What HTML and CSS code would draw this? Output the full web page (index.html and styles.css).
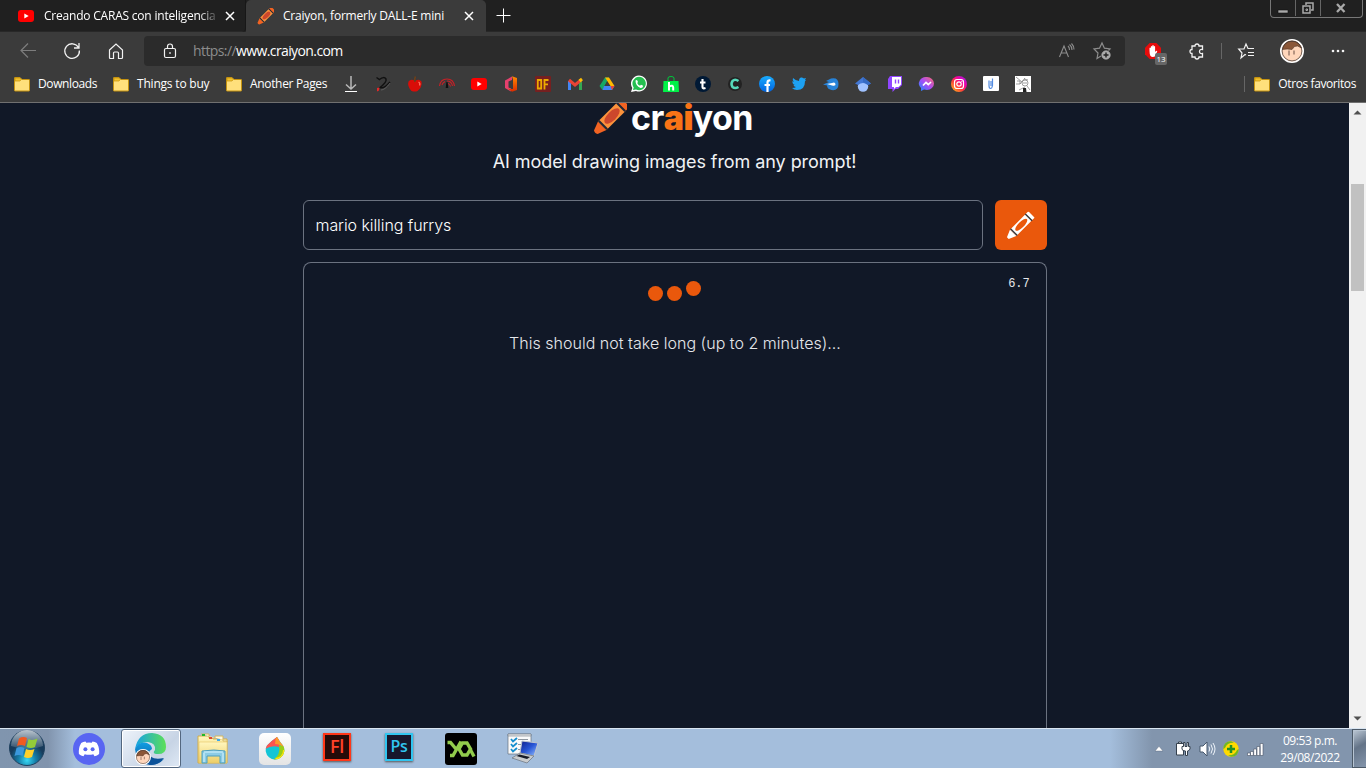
FILE: index.html
```html
<!DOCTYPE html>
<html lang="es">
<head>
<meta charset="utf-8">
<title>Craiyon, formerly DALL-E mini</title>
<link rel="stylesheet" href="styles.css">
</head>
<body>
<svg class="defs" width="0" height="0">
  <defs>
    <symbol id="folder" viewBox="0 0 16 16"><path d="M.5 2q0-.5.5-.5h5l2 2h7q.5 0 .5.5v10.500q0 .5-.5.5H1q-.5 0-.5-.5z" fill="#ffe07c" stroke="#c49210"/><path d="M1 2h5l1.300 1.500L6 5H1z" fill="#f2c12e" stroke="#c49210" stroke-width=".7"/></symbol>
    <symbol id="close" viewBox="0 0 10 10"><path d="M1 1l8 8M9 1L1 9" stroke="#fff" stroke-width="1.500"/></symbol>
    <symbol id="youtube" viewBox="0 0 16 16"><rect y="2" width="16" height="12" rx="3" fill="#f00"/><path d="M6.300 5.500v5L10.700 8z" fill="#fff"/></symbol>
    <symbol id="crayon" viewBox="0 0 34 34"><g transform="rotate(45 17 17)"><path d="M11 28l3.500 9q2.500 2 5 0l3.500-9z" fill="#f26322"/><rect x="11" y="1" width="12" height="27" fill="#fb923c"/><path d="M11 1v-4q0-2 2-2h8q2 0 2 2v4z" fill="#f26322"/><path d="M11 1.500h12M11 27h12" stroke="#222735" stroke-width="2"/><ellipse cx="17" cy="14.200" rx="4.400" ry="10" fill="#cc472c"/></g></symbol>
    <symbol id="face" viewBox="0 0 24 24"><circle cx="12" cy="12" r="11.200" fill="#ffd6bb" stroke="#fff" stroke-width="1.600"/><path d="M2.500 10.500Q4 2 12 2Q19 2 21.500 9L17.500 7L14.500 7.500L12 10.500Q7 9.500 2.500 10.500z" fill="#8b5738" stroke="#51372a" stroke-width=".6"/><circle cx="12" cy="12" r="9.900" fill="none" stroke="#3b302c" stroke-width=".7"/><path d="M9 11.500v5m5-5v4" stroke="#6c5147" stroke-width="1"/></symbol>
    <linearGradient id="edge1" x2="1"><stop stop-color="#15a1e6"/><stop offset="1" stop-color="#5ce057"/></linearGradient>
    <linearGradient id="edge2" x2="0" y2="1"><stop stop-color="#119de2"/><stop offset="1" stop-color="#0c579f"/></linearGradient>
    <linearGradient id="insta" x1="0" y1="1" x2="1" y2="0"><stop stop-color="#ffca18"/><stop offset=".4" stop-color="#ff4038"/><stop offset=".65" stop-color="#f000a1"/><stop offset="1" stop-color="#8e22f3"/></linearGradient>
    <linearGradient id="messenger" x1="0" y1="1" x2="1" y2="0"><stop stop-color="#178bff"/><stop offset=".5" stop-color="#a94cf6"/><stop offset="1" stop-color="#ff6b69"/></linearGradient>
    <linearGradient id="fb" x2="0" y2="1"><stop stop-color="#18acfe"/><stop offset="1" stop-color="#0163e0"/></linearGradient>
    <linearGradient id="office" x2="0" y2="1"><stop stop-color="#ff8a00"/><stop offset="1" stop-color="#d92b00"/></linearGradient>
    <radialGradient id="orb" cy=".85"><stop stop-color="#39d9f4"/><stop offset=".5" stop-color="#157da8"/><stop offset="1" stop-color="#173b5b"/></radialGradient>
    <linearGradient id="shine" x2="0" y2="1"><stop stop-color="#fff" stop-opacity=".7"/><stop offset="1" stop-color="#fff" stop-opacity=".1"/></linearGradient>
    <linearGradient id="screen" x2="1" y2="1"><stop stop-color="#101f8a"/><stop offset=".5" stop-color="#2856d6"/><stop offset="1" stop-color="#9bc5ff"/></linearGradient>
    <linearGradient id="tray" x2="0" y2="1"><stop stop-color="#fff"/><stop offset="1" stop-color="#e4e4e4"/></linearGradient>
    <linearGradient id="paper" x2="0" y2="1"><stop stop-color="#fff6bd"/><stop offset="1" stop-color="#edce68"/></linearGradient>
    <clipPath id="drop"><path d="M18 4Q21 9 24 12.500A9.300 9.300 0 1 1 8 12.500Q12 8 18 4z"/></clipPath>
  </defs>
</svg>

<header class="browser">
  <div class="tabs">
    <div class="tab tab-back">
      <svg width="16" height="16"><use href="#youtube"/></svg>
      <span class="tab-title fade">Creando CARAS con inteligencia</span>
      <svg class="tab-close" width="10" height="10"><use href="#close"/></svg>
    </div>
    <div class="tab tab-active">
      <svg width="17" height="17"><use href="#crayon"/></svg>
      <span class="tab-title second">Craiyon, formerly DALL-E mini</span>
      <svg class="tab-close" width="10" height="10"><use href="#close"/></svg>
    </div>
    <svg class="new-tab" width="14" height="14" fill="none" stroke="#fff"><path d="M-.5 7.500h14M6.500 .5v14"/></svg>
    <div class="window-buttons">
      <div class="wb"><svg width="12" height="12"><path d="M1 8h10v3H1z" fill="#a9a9a9" stroke="#111" stroke-width=".6"/></svg></div>
      <div class="wb"><svg width="12" height="12" fill="none" stroke="#a9a9a9" stroke-width="1.500"><path d="M4 3V1h7v7H9M1 4h7v7H1z"/><path d="M4 7h1.500v1.500H4z" stroke-width="1"/></svg></div>
      <div class="wb wide"><svg width="10" height="10"><path d="M1 1l7.500 8M8.500 1L1 9" stroke="#a9a9a9" stroke-width="2.300"/></svg></div>
    </div>
  </div>

  <div class="nav">
    <svg class="back" width="16" height="16" fill="none" stroke="#7d7d7d" stroke-width="1.200"><path d="M16 7.500H1M8 .5L1 7.500l7 7"/></svg>
    <svg class="reload" width="18" height="18" fill="none" stroke="#f2f2f2" stroke-width="1.300"><path d="M15.500 5.500a7.300 7.300 0 1 0 .9 3M16 1v5h-5"/></svg>
    <svg class="home" width="16" height="18" fill="none" stroke="#f2f2f2" stroke-width="1.200"><path d="M1.500 8L8 2l6.500 6v7.500q0 1-1 1h-3V11q0-1-1-1h-3q-1 0-1 1v5.500h-3q-1 0-1-1z"/></svg>
    <div class="address">
      <svg width="12" height="16" fill="none" stroke="#f2f2f2" stroke-width="1.200"><rect x=".5" y="5.500" width="11" height="9" rx="1.500"/><path d="M3.500 5V3.500q0-2.500 2.500-2.500t2.500 2.500V5"/><path d="M5.200 9.200h1.600v1.600H5.200z" fill="#f2f2f2" stroke="none"/></svg>
      <span class="url"><span class="scheme">https://</span>www.craiyon.com</span>
      <svg class="read" width="16" height="16" fill="none" stroke="#8d8d8d" stroke-width="1.100"><path d="M.5 14L5 3l4.500 11M2.200 10h5.600M9 3q1.600 1.500 1.500 4M10.500 1.500q2.500 2 2.500 5.500M12.500.5q2.500 2.500 2.500 6"/></svg>
      <svg width="18" height="18" fill="none" stroke="#8d8d8d" stroke-width="1.200"><path d="M8 14l-4 2.500 1-5.500L1 7l5.500-.8L9 1l2.400 5.200L17 7l-1.500 1.500"/><circle cx="13" cy="13" r="4.300" fill="#aaa" stroke="#aaa" stroke-width=".6"/><path d="M10.500 13h5M13 10.500v5" stroke="#222" stroke-width="1.400"/></svg>
    </div>
    <div class="blocker">
      <svg width="16" height="16"><path d="M4.700 0h6.600L16 4.700v6.600L11.300 16H4.700L0 11.300V4.700z" fill="#e60c0c"/><path d="M4.500 8V5q.7-1 1.400 0V3.500q.7-1 1.400 0V2.500q.7-1 1.400 0v1q.7-1 1.400 0V9q1.500-2 2.200-1L10.500 13q-3 2-5 0-1-2-1-5" fill="#fff"/></svg>
      <span class="badge">13</span>
    </div>
    <svg class="puzzle" width="16" height="17" fill="none" stroke="#f2f2f2" stroke-width="1.300"><path d="M3 3h3q0-2 2-2t2 2h3.500v3.500Q10.500 6 10.500 8.500t3 2V14H10q0 2-2 2t-2-2H3v-3.500q-2 0-2-2t2-2z"/></svg>
    <i class="divider"></i>
    <svg class="favs" width="17" height="16" fill="none" stroke="#f2f2f2" stroke-width="1.200"><path d="M8 12l-1-.5L3 15l1-5L.7 6H6l2-5 2 4.500H16M10 9.500h6M10 12.500h6"/></svg>
    <svg class="profile" width="24" height="24"><use href="#face"/></svg>
    <svg width="14" height="4" fill="#f4f4f4"><circle cx="2" cy="2" r="1.300"/><circle cx="7" cy="2" r="1.300"/><circle cx="12" cy="2" r="1.300"/></svg>
  </div>

  <div class="bookmarks">
    <div class="bm-folder f1"><svg width="16" height="16"><use href="#folder"/></svg><span>Downloads</span></div>
    <div class="bm-folder f2"><svg width="16" height="16"><use href="#folder"/></svg><span>Things to buy</span></div>
    <div class="bm-folder f3"><svg width="16" height="16"><use href="#folder"/></svg><span>Another Pages</span></div>
    <div class="bm-icons">
      <svg viewBox="0 0 16 16" fill="none" stroke="#b9b9b9" stroke-width="1.500"><path d="M8 0v13M3 8.500L8 13l5-4.500"/><path d="M2 15.500h12" stroke="#fff" stroke-width="1"/></svg>
      <svg viewBox="0 0 16 16" fill="none"><path d="M1.500 1.500l3 2Q9 0 11 3q1 3-6 8.500Q9 13 15 6" stroke="#111" stroke-width="1.500"/><path d="M6 14q4 0 9-7" stroke="#666" stroke-width=".8"/><path d="M2 12l2.500-.5-.5 3-2 1z" fill="#e32929"/></svg>
      <svg viewBox="0 0 16 16"><path d="M8 5Q4 2.500 1.500 5.500Q0 10 4.500 15q3.500 1.200 6 0q5-4 4-9.500q-2.500-3-6.500-.5" fill="#d90d08"/><path d="M8 6Q7 3 8.500.5" stroke="#704018" stroke-width="1.500" fill="none"/><path d="M11.500 6q2 1 1 3.500" stroke="#ff6a58" stroke-width="1.300" fill="none"/></svg>
      <svg viewBox="0 0 16 16" fill="none" stroke="#c91f26" stroke-width="1.100"><path d="M.5 10Q1.500 3 8 3q6.500 0 7.500 7M8 5q4.500 0 5.500 5M9 7.500q2 .5 2.500 3M3 9l1-2 2-1.500"/><path d="M8 6l.7 5.500H7.300z" fill="#111" stroke="#111"/></svg>
      <svg viewBox="0 0 16 16"><use href="#youtube"/></svg>
      <svg viewBox="0 0 16 16"><path d="M2 4.500L9 .5v3.500L5.500 5.500v6L8 12.500v3l-6-3.500z" fill="#e6406d"/><path d="M9 .3l5 1.700v12l-5 1.700-4-3 5 .3V3.500z" fill="url(#office)"/></svg>
      <svg viewBox="0 0 16 16"><rect width="16" height="16" rx="1" fill="#762020"/><path d="M2.800 4h3.400v8.500H2.800zM9.500 13.500V4h4M9.500 8.300H13" stroke="#edaa00" stroke-width="1.800" fill="none"/></svg>
      <svg viewBox="0 0 16 16" fill="none" stroke-width="3"><path d="M2.500 14V5" stroke="#4285f4"/><path d="M13.500 14V5" stroke="#34a853"/><path d="M2 4l6 5 6-5" stroke="#ea4335"/><path d="M12.500 5L15 3" stroke="#fbbc04"/></svg>
      <svg viewBox="0 0 16 16"><path d="M6 1.500h4L3.500 14l-3-4z" fill="#16a765"/><path d="M6 1.500h4l5.500 8.500h-4z" fill="#ffba00"/><path d="M5 10h10.500l-2.500 4H3.500z" fill="#4285f4"/><path d="M11.500 10h4L13 14z" fill="#ea4335"/><path d="M8 5.500l2.500 4.500h-5z" fill="#3b3b3b"/></svg>
      <svg viewBox="0 0 16 16"><path d="M0 16l1.300-4A8 8 0 1 1 5 15z" fill="#fff"/><path d="M2 14l.7-2.500A6.700 6.700 0 1 1 5 13.500z" fill="#25bf50"/><path d="M4.500 4.500l1.500-.5 1 2-.8 1q.8 2 2.800 2.800l1-1 2.200 1q-.4 2.500-2.700 2.200Q4.500 10 4.500 4.500" fill="#fff"/></svg>
      <svg viewBox="0 0 16 16"><path d="M.5 5h15l.5 11H0z" fill="#00f047"/><path d="M5 5V2q0-1.500 3-1.500T11 2v3" fill="none" stroke="#00c73c"/><path d="M6 6v8.500M6 10.500q4.200-2 4.200 1v3" fill="none" stroke="#fff" stroke-width="2"/></svg>
      <svg viewBox="0 0 16 16"><circle cx="8" cy="8" r="8" fill="#001935"/><path d="M7.500 3v8q0 2 3 1M5 6.500h5.500" fill="none" stroke="#fff" stroke-width="2.100"/></svg>
      <svg viewBox="0 0 16 16"><circle cx="8" cy="8" r="7" fill="#222"/><path d="M11.500 5Q8 2.500 5.500 5q-2 3 0 6Q8 13 11.500 11" fill="none" stroke="#56dabb" stroke-width="2.500"/></svg>
      <svg viewBox="0 0 16 16"><circle cx="8" cy="8" r="8" fill="url(#fb)"/><path d="M8.500 16V6.500q0-2.500 3-2M5.500 9h5.500" fill="none" stroke="#fff" stroke-width="2.200"/></svg>
      <svg viewBox="0 0 16 16"><path d="M1 12q3 0 4-1Q3 11 2.500 9H4Q1 8 1.500 5L3 6Q1 4 2 2q3 3 6 3Q8 1 11 1.500l2 1L15 2l-1 2 1 .2-1 1Q14 14 6 14q-3 0-5-2" fill="#1da1f2"/></svg>
      <svg viewBox="0 0 16 16"><path d="M0 8.500L6 6 3 5l5-2.500Q15.500 1 15.500 8t-7 6Q4 13 4 9.500z" fill="#2783d9"/><path d="M4 8l5-1q3-1.500 3.500 1T9 9.500z" fill="#fff"/></svg>
      <svg viewBox="0 0 16 16"><circle cx="8" cy="10.500" r="5.200" fill="#a0c2ff"/><path d="M0 7.500L8 1l8 6.500L13 9Q8 5 3 9z" fill="#4277d4"/><path d="M8 1l8 6.500L13 9 8 6z" fill="#356ac3"/></svg>
      <svg viewBox="0 0 16 16"><path d="M3 0h12v9l-4 4H8.500l-3 3v-3H1V3z" fill="#9146ff"/><path d="M5 1h9v7.500L11.500 11H9l-2 2v-2H5z" fill="#fff"/><path d="M8.500 3.500v4m3-4v4" stroke="#9146ff" stroke-width="1.400"/></svg>
      <svg viewBox="0 0 16 16"><path d="M8 1a7 6.500 0 0 1 0 13l-3-.5L2 15v-3A7 6.500 0 0 1 8 1" fill="url(#messenger)"/><path d="M4 9.500L7 6.500l2.300 2L12 6" fill="none" stroke="#fff" stroke-width="1.700"/></svg>
      <svg viewBox="0 0 16 16"><circle cx="8" cy="8" r="8" fill="url(#insta)"/><g fill="none" stroke="#fff" stroke-width="1.200"><rect x="3.500" y="3.500" width="9" height="9" rx="2.500"/><circle cx="8" cy="8" r="2.200"/></g><circle cx="10.800" cy="5.300" r=".6" fill="#fff"/></svg>
      <svg viewBox="0 0 16 16"><rect width="16" height="15" rx="1" fill="#fff"/><path d="M6 4.500v5q0 3 1.500 3t2-3V2.500M8 5v5" fill="none" stroke="#538be0" stroke-width="1.200"/></svg>
      <svg viewBox="0 0 16 16"><path fill="#fff" d="M0 0h16v16H0z"/><g fill="none" stroke="#777" stroke-width=".7"><circle cx="10" cy="7" r="3"/><path d="M1 1l6 5M2 5h3v3H1m4 0l5-6m0 9l-6 3m8-4l3 4M9 3l4 1M8 7h4"/></g><path d="M8 12h3l.5 4H8z" fill="#222"/></svg>
    </div>
    <div class="bm-other"><svg width="16" height="16"><use href="#folder"/></svg><span>Otros favoritos</span></div>
  </div>
</header>

<main class="viewport">
  <div class="page">
    <div class="logo">
      <svg width="34" height="34"><use href="#crayon"/></svg>
      <span class="wordmark">cr<b>ai</b>yon</span>
    </div>
    <p class="tagline">AI model drawing images from any prompt!</p>
    <div class="prompt-row">
      <div class="prompt">mario killing furrys</div>
      <div class="draw"><svg width="30" height="30" viewBox="0 0 30 30"><g transform="translate(-1.500 1.500) rotate(45 15 15)"><path d="M10.500 24l3.300 7.500h2.400l3.300-7.500z" fill="#fff"/><path d="M10.500-1q0-1 1-1h7q1 0 1 1v25h-9z" fill="#fff"/><ellipse cx="15" cy="12.500" rx="2.900" ry="8" fill="#ea580c"/><path d="M10.200 2h9.600M10.200 23h9.600" stroke="#3c3838" stroke-width="1.500"/></g></svg></div>
    </div>
    <section class="result">
      <span class="timer">6.7</span>
      <div class="dots"><i></i><i></i><i class="up"></i></div>
      <p class="wait">This should not take long (up to 2 minutes)...</p>
    </section>
  </div>
  <div class="scrollbar">
    <svg width="9" height="5"><path d="M.5 4.500L4.500 .5l4 4z" fill="#505050"/></svg>
    <div class="thumb"></div>
    <svg class="down" width="9" height="5"><path d="M.5.5h8l-4 4z" fill="#505050"/></svg>
  </div>
</main>

<footer class="taskbar">
  <div class="start"><svg width="38" height="38" viewBox="0 0 38 38"><circle cx="19" cy="19" r="17.500" fill="url(#orb)" stroke="#20415f"/><path d="M3 17a16 16 0 0 1 32 0q-15 6-32 0" fill="url(#shine)"/><path d="M11 9.500q4-2.500 8-.5l-2 8q-4-2-8 0z" fill="#f05a21"/><path d="M20.500 10q4 2 9-.5l-2.500 8.500q-4 2-8.500 0z" fill="#93cc38"/><path d="M8.500 19q4-2 8 0l-2 8q-4-2-8 0z" fill="#3b98dd"/><path d="M18 20q4 2 8.500 0L24 28q-4 2-8 0z" fill="#ffd12b"/></svg></div>
  <div class="apps">
    <div class="app"><svg width="32" height="32"><circle cx="16" cy="16" r="16" fill="#5865f2"/><path d="M12.500 8.500l.8 1.300q2.700-.4 5.400 0l.8-1.300q2.500.4 4.300 1.500 3 5 2.300 11-2 1.700-4.600 2.300l-1.200-2q-4.300 1-8.600 0l-1.200 2Q7.900 22.700 5.900 21 5.200 15 8.200 10q1.800-1.100 4.300-1.500" fill="#fff"/><circle cx="12.400" cy="16.300" r="2" fill="#5865f2"/><circle cx="19.600" cy="16.300" r="2" fill="#5865f2"/></svg></div>
    <div class="app active"><svg width="34" height="34" viewBox="0 0 34 34"><path d="M1 17Q4 1 18 1q14 1 14 14 0 8-10 7-4-1-1-4 1-7-7-8Q5 10 1 17" fill="url(#edge1)"/><path d="M1 17Q5 9 13 11q5 2 5 6-6 4-2 9 5 5 14 1-5 6-14 6Q2 31 1 17" fill="url(#edge2)"/><path d="M15 19q0 10 15 7-5 7-14 7-5-3-1-14" fill="#0b5299"/><svg x="1" y="17" width="16" height="16"><use href="#face"/></svg></svg></div>
    <div class="app"><svg width="34" height="32"><path d="M2 3h12l3 3h14v24H2z" fill="url(#paper)" stroke="#d0ad4d"/><path d="M5 1h8v4h6V3h8v5h5" fill="#fff9df" stroke="#d3b660"/><path d="M6 1h3v2H6z" fill="#20b829"/><path d="M13 4h3v2h-3z" fill="#dd4936"/><path d="M21 6h3v2h-3z" fill="#39a9ee"/><path d="M3 9h28v21H3z" fill="url(#paper)" stroke="#e5c462" stroke-width=".6"/><path d="M6 30V18q12-2 23 0v12h-5v-7H11v7z" fill="#8ccce6" stroke="#4f9fbc"/><path d="M8 19h19M8 20v9m19-9v9" stroke="#d6f5ff" fill="none"/></svg></div>
    <div class="app"><svg width="32" height="32"><rect width="32" height="32" rx="5" fill="url(#tray)"/><g clip-path="url(#drop)"><path fill="#14c5d6" d="M6 3h20v24H6z"/><path d="M6 3h14v11q-7-2-14 2z" fill="#ff5350"/><path d="M17 3h8v12q-4-4-9-4z" fill="#ff9a2d"/><path d="M20 12l6 2v13H14q8-5 6-15" fill="#98cf17"/><path d="M24 17q0 7-8 8l2 2h8V17z" fill="#ffe20c"/></g></svg></div>
    <div class="app"><div class="adobe fl">Fl</div></div>
    <div class="app"><div class="adobe ps">Ps</div></div>
    <div class="app"><svg width="32" height="32"><rect width="32" height="32" rx="3" fill="#000"/><g fill="none" stroke="#92cc4c" stroke-width="3.400"><path d="M2.500 9.500h3L11 16M16 8.500L8 22.500H5"/><path d="M17.500 10h4.500l3.500 6-3.500 6h-4.500l-3.500-6z"/><path d="M25 16l4 7.500"/></g></svg></div>
    <div class="app"><svg width="34" height="32"><path d="M2 1h23v20H2z" fill="#fafafa" stroke="#65717c" stroke-width=".7"/><path d="M2 1h23v2H2z" fill="#e6e6e6" stroke="#737c86" stroke-width=".6"/><path d="M12 6.500h10M12 11.500h7M12 16.500h5" stroke="#9098a0"/><path d="M5 6l2 2.500 4-3.500M5 11l2 2.500 4-3.500M5 16l2 2.500 4-3.500" fill="none" stroke="#168ece" stroke-width="1.800"/><path d="M16 8l16 2-4 13-14-3z" fill="url(#screen)" stroke="#bfc6cf"/><path d="M14 20l14 3-7 7-15-5z" fill="#c8cbce" stroke="#69717c" stroke-width=".7"/><path d="M13.500 21.500l10.500 2.500-3 2-10.500-3z" fill="#171b27"/></svg></div>
  </div>
  <div class="tray">
    <svg width="8" height="5"><path d="M0 5L4 .3 8 5z" fill="#fff" stroke="#526174" stroke-width=".4"/></svg>
    <svg width="16" height="16" fill="#fff" stroke="#34404d"><path d="M1.500 2.500h7v11.500h-7zM3.500 1h3v1.500h-3z"/><path d="M7 5.500h1.500v-4H10v4h2v-4h1.500v4H15V8q-1 2-2.500 2v4.500h-2V10Q7 10 7 8z"/></svg>
    <svg width="16" height="16"><path d="M1 5h3l4-4v14l-4-4H1z" fill="#fff" stroke="#46586d"/><path d="M10 5.500q1.500 2.500 0 5M12 3.500q3 4.500 0 9M14 2q4 6 0 12" fill="none" stroke="#eef4fa"/></svg>
    <svg width="16" height="16"><circle cx="8" cy="8" r="7.700" fill="#ffda00"/><path d="M.3 8Q.5.500 8 .3l3 1.500Q4 1.500 2 7zM15.700 8Q15.500 15.500 8 15.700l-3-1.500q7 .300 9-5.200z" fill="#70b725"/><path d="M8 4v8M4 8h8" stroke="#229124" stroke-width="2.500"/></svg>
    <svg width="17" height="16" fill="#fff" stroke="#465365" stroke-width=".6"><path d="M.5 12h2.800v2.500H.5zM3.500 10.500h2.800v4H3.500zM6.700 8h2.800v6.500H6.700zM10 5.500h2.800v9H10zM13.200 2.500H16v12h-2.800z"/></svg>
    <div class="clock"><span>09:53 p.m.</span><span>29/08/2022</span></div>
    <div class="show-desktop"></div>
  </div>
</footer>
</body>
</html>
```
FILE: styles.css
```css
* { box-sizing: border-box; }
body { margin: 0; width: 1366px; height: 768px; overflow: hidden; display: flex; flex-direction: column; background: #111827; font: 12px/16px "Open Sans", sans-serif; color: #fff; }
svg { display: block; flex: none; overflow: visible; }
p { margin: 0; }
.defs { position: absolute; }
.browser { position: relative; z-index: 1; height: 103px; background: #3b3b3b; border-bottom: 1px solid #707070; flex: none; }
.tabs { height: 32px; display: flex; background: #202020; border-bottom: 1px solid #282828; }
.tab { display: flex; align-items: center; height: 32px; white-space: nowrap; }
.tab-back { width: 246px; padding-left: 18px; border-right: 1px solid #171717; border-radius: 0 0 4px 0; }
.tab-active { width: 240px; padding-left: 11px; background: #3b3b3b; border-radius: 5px 5px 0 0; }
.tab-title { display: block; margin-left: 10px; width: 172px; letter-spacing: -.21px; }
.tab-title.second { margin-left: 9px; width: 167px; }
.fade { -webkit-mask-image: linear-gradient(90deg, #000 155px, transparent 176px); }
.tab-close { margin-left: 9px; }
.second + .tab-close { margin-left: 14px; }
.new-tab { margin: 8px 0 0 11px; }
.window-buttons { margin-left: auto; margin-right: 3px; width: 93px; height: 18px; border: 1px solid #777; border-top: 0; border-radius: 0 0 4px 4px; display: flex; padding-bottom: 1px; }
.wb { width: 25px; border-right: 1px solid #666; display: flex; align-items: center; justify-content: center; }
.wb.wide { flex: 1; border: 0; }
.wb.wide svg { margin-right: 2px; }
.nav { height: 38px; display: flex; align-items: center; padding-left: 20px; }
.reload { margin-left: 27px; }
.home { margin-left: 27px; }
.address { width: 981px; height: 30px; margin-left: 20px; padding: 0 14px 0 20px; background: #2b2b2b; border-radius: 4px; display: flex; align-items: center; }
.url { margin-left: 17px; font-size: 14px; letter-spacing: -.6px; }
.scheme { color: #8c8c8c; }
.read { margin-left: auto; margin-right: 18px; }
.blocker { position: relative; margin-left: 20px; }
.badge { position: absolute; left: 10px; top: 10px; width: 12px; height: 12px; background: #666; border-radius: 2px; font-size: 8px; line-height: 12px; text-align: center; }
.puzzle { margin-left: 28px; }
.divider { width: 1px; height: 16px; background: #666; margin-left: 16px; }
.favs { margin-left: 16px; }
.profile { margin: 0 27px 0 25px; }
.bookmarks { height: 32px; display: flex; align-items: center; padding: 0 10px 4px 14px; white-space: nowrap; }
.bm-folder, .bm-other { display: flex; align-items: center; gap: 8px; letter-spacing: -.38px; }
.f1 { width: 99px; }
.f2 { width: 113px; letter-spacing: -.2px; }
.f3 { width: 109px; letter-spacing: -.33px; }
.bm-icons { display: flex; }
.bm-icons svg { width: 16px; height: 16px; margin: 0 8px; }
.bm-other { margin-left: auto; border-left: 1px solid #666; padding-left: 9px; height: 16px; letter-spacing: -.4px; }
.viewport { height: 625px; flex: none; display: flex; }
.page { flex: 1; display: flex; flex-direction: column; align-items: center; }
.logo { height: 34px; display: flex; align-items: flex-start; margin-left: -3px; }
.logo svg { margin-top: -2px; }
.wordmark { margin-left: 4px; font: 700 34px/30px Inter, sans-serif; letter-spacing: -.6px; }
.wordmark b { color: #f97316; }
.tagline { margin-top: 11px; font: 400 18px/28px Inter, sans-serif; letter-spacing: -.07px; color: #f0f2f5; }
.prompt-row { margin-top: 24px; width: 744px; display: flex; gap: 12px; flex: none; }
.prompt { flex: 1; height: 50px; border: 1px solid #6b7280; border-radius: 6px; padding: 0 12px; font: 300 16px/49px Inter, sans-serif; letter-spacing: -.08px; }
.draw { width: 52px; height: 50px; border-radius: 6px; background: #ea580c; display: flex; align-items: center; justify-content: center; }
.result { position: relative; width: 744px; height: 466px; flex: none; margin-top: 12px; border: 1px solid #6b7280; border-bottom: 0; border-radius: 8px 8px 0 0; display: flex; flex-direction: column; align-items: center; }
.timer { position: absolute; right: 16px; top: 13px; font: 12px/16px "Liberation Mono", monospace; letter-spacing: -.1px; color: #e5e7eb; }
.dots { margin-top: 22.500px; display: flex; gap: 4px; height: 15.500px; }
.dots i { width: 15px; height: 15px; border-radius: 50%; background: #ea580c; }
.dots .up { margin-top: -4.500px; }
.wait { margin-top: 30px; padding-left: 1px; font: 300 16px/24px Inter, sans-serif; letter-spacing: .02px; color: #e5e7eb; }
.scrollbar { width: 17px; background: #f1f1f1; display: flex; flex-direction: column; align-items: center; padding: 7px 0 7px; }
.thumb { margin-top: 69px; width: 13px; height: 107px; background: #c1c1c1; }
.down { margin-top: auto; }
.taskbar { height: 40px; flex: none; display: flex; border-top: 1px solid #d9e5f1; background: linear-gradient(90deg, #8095ae 0, #8194ad 48px, #a4bedc 75px, #a4bedc 1110px, #8295ad 1152px); }
.start { width: 58px; padding-left: 8px; }
.apps { display: flex; }
.app { width: 62px; height: 39px; display: flex; align-items: center; justify-content: center; }
.app.active { width: 60px; margin: 0 1px; border: 1px solid #53677f; border-radius: 3px; background: linear-gradient(135deg, #edf3fa, #c7d4e5 65%, #dfe9f5); box-shadow: inset 0 0 0 1px #fff; }
.adobe { width: 28px; height: 28px; margin-bottom: 4px; border: 2px solid #ff3719; background: #260b09; color: #ff4229; font: 18px/23px "Open Sans", sans-serif; letter-spacing: -.4px; text-align: center; box-shadow: 0 1px 2px #555; }
.fl { font-weight: 600; }
.ps { border-color: #31c5f0; background: #17172d; color: #31c5f0; font-weight: 600; font-size: 16px; }
.tray { margin-left: auto; display: flex; align-items: center; gap: 8px; }
.tray svg:first-child { margin-right: 4px; }
.clock { margin-left: 8px; width: 60px; display: flex; flex-direction: column; align-items: center; letter-spacing: -.43px; line-height: 17px; white-space: nowrap; }
.show-desktop { width: 14px; height: 39px; margin-left: 4px; border: 1px solid #4b5967; border-right: 0; background: linear-gradient(150deg, #bdc9d6, #647488 45%, #8495ab); box-shadow: inset 1px 1px #b7c4d2; }
```
